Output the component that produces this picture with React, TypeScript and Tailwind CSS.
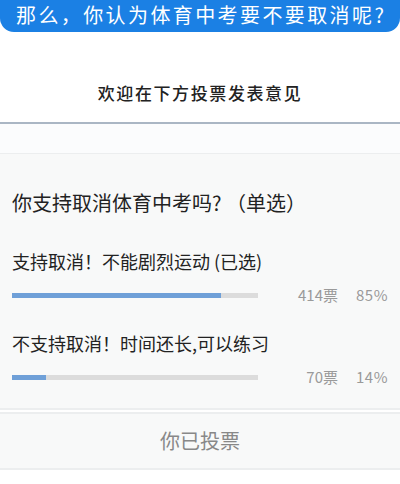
export default function App() {
  const options = [
    { label: "支持取消！不能剧烈运动 (已选)", votes: "414票", pct: "85%", fill: "w-[209px]" },
    { label: "不支持取消！时间还长,可以练习", votes: "70票", pct: "14%", fill: "w-[34px]" },
  ];
  return (
    <div className="w-[400px] h-[484px] bg-white overflow-hidden font-['Noto_Sans_CJK_SC',sans-serif]">
      {/* banner */}
      <div className="h-[32px] bg-[#1b80e4] rounded-b-[14px] flex items-center pl-[16px]">
        <span className="text-white text-[20px] leading-none tracking-[2.4px] -mt-[2px]">
          那么，你认为体育中考要不要取消呢?
        </span>
      </div>

      <div className="h-[90px] flex items-center justify-center pt-[32px]">
        <span className="text-[#222] text-[17px] font-medium tracking-[1.6px]">欢迎在下方投票发表意见</span>
      </div>
      <div className="h-[2px] bg-[#aab6c4]" />
      <div className="h-[30px] bg-[#fbfcfd] border-b border-[#eceeef]" />

      {/* poll */}
      <div className="bg-[#f8f9f9] h-[256px] border-b-2 border-[#eceeef]">
        <div className="pt-[39px] pl-[12px] text-[20px] text-[#222] leading-none">你支持取消体育中考吗? （单选）</div>
        {options.map((o, i) => (
          <div key={i} className={i === 0 ? "mt-[39px]" : "mt-[31px]"}>
            <div className="pl-[12px] text-[18px] text-[#222] leading-none">{o.label}</div>
            <div className="flex items-center mt-[17px] pl-[12px] h-[16px]">
              <div className="w-[246px] h-[5px] bg-[#dcdcdc]">
                <div className={`${o.fill} h-full bg-[#6fa0d8]`} />
              </div>
              <span className="w-[80px] text-right text-[15px] text-[#9a9a9a]">{o.votes}</span>
              <span className="w-[50px] text-right text-[15px] text-[#9a9a9a] tracking-[0.5px]">{o.pct}</span>
            </div>
          </div>
        ))}
      </div>

      <div className="h-[58px] bg-[#f8f9f9] border-t-2 border-b-2 border-[#eceeef] mt-[2px] flex items-center justify-center">
        <span className="text-[20px] text-[#888]">你已投票</span>
      </div>
    </div>
  );
}
